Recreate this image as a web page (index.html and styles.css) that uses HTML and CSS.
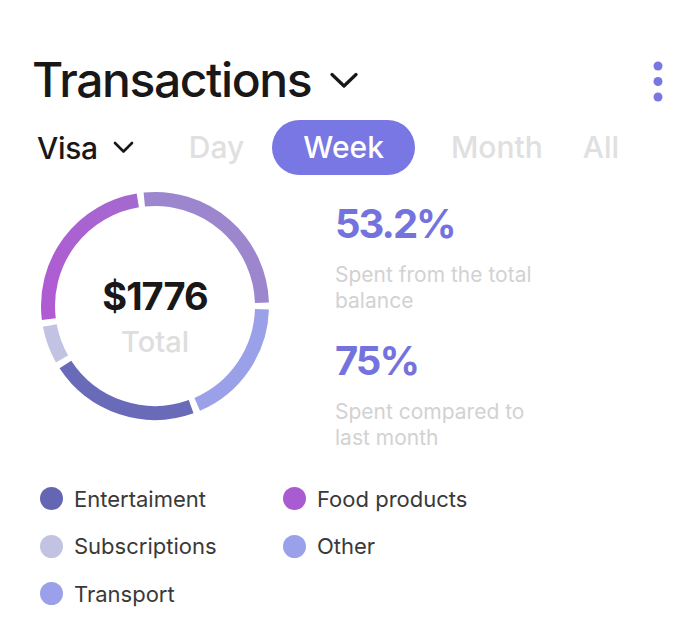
FILE: index.html
```html
<!DOCTYPE html>
<html lang="en">
<head>
<meta charset="utf-8">
<title>Transactions</title>
<link rel="stylesheet" href="styles.css">
</head>
<body>
<div class="card">
  <header class="head">
    <h1 class="title">Transactions
      <svg class="title-chev" width="28" height="17" viewBox="0 0 28 17"><path d="M2 2.5 L14 14 L26 2.5" fill="none" stroke="#1a1718" stroke-width="3.2" stroke-linecap="round" stroke-linejoin="round"/></svg>
    </h1>
    <button class="more" aria-label="More">
      <svg width="10" height="42" viewBox="0 0 10 42"><circle cx="5" cy="5" r="4.5" fill="#7a78e0"/><circle cx="5" cy="20.5" r="4.5" fill="#7a78e0"/><circle cx="5" cy="36" r="4.5" fill="#7a78e0"/></svg>
    </button>
  </header>

  <div class="filters">
    <div class="account">Visa
      <svg class="acc-chev" width="21" height="13" viewBox="0 0 21 13"><path d="M2 2 L10.5 10.5 L19 2" fill="none" stroke="#1a1718" stroke-width="2.6" stroke-linecap="round" stroke-linejoin="round"/></svg>
    </div>
    <nav class="tabs">
      <span class="tab">Day</span>
      <span class="tab active">Week</span>
      <span class="tab">Month</span>
      <span class="tab">All</span>
    </nav>
  </div>

  <div class="overview">
    <div class="donut">
      <svg width="230" height="230" viewBox="0 0 230 230">
        <g fill="none" stroke-width="14">
          <path d="M104.28 8.54 A107 107 0 0 1 221.95 111.73" stroke="#9c87cf"/>
          <path d="M221.95 118.27 A107 107 0 0 1 157.23 213.31" stroke="#9aa1e9"/>
          <path d="M151.16 215.71 A107 107 0 0 1 25.41 173.52" stroke="#6a6bb8"/>
          <path d="M22.01 167.93 A107 107 0 0 1 9.81 134.59" stroke="#c2c3e3"/>
          <path d="M8.81 128.13 A107 107 0 0 1 97.80 9.39" stroke="url(#mag)"/>
        </g>
        <defs>
          <linearGradient id="mag" x1="0" y1="1" x2="1" y2="0">
            <stop offset="0" stop-color="#b05ad3"/>
            <stop offset="1" stop-color="#a569cf"/>
          </linearGradient>
        </defs>
      </svg>
      <div class="donut-label">
        <span class="amount">$1776</span>
        <span class="amount-sub">Total</span>
      </div>
    </div>
    <div class="stats">
      <div class="stat">
        <div class="stat-value">53.2%</div>
        <div class="stat-desc">Spent from the total<br>balance</div>
      </div>
      <div class="stat">
        <div class="stat-value">75%</div>
        <div class="stat-desc">Spent compared to<br>last month</div>
      </div>
    </div>
  </div>

  <ul class="legend">
    <li><span class="dot" style="background:#6466b4"></span>Entertaiment</li>
    <li><span class="dot" style="background:#a95bd1"></span>Food products</li>
    <li><span class="dot" style="background:#c2c3e2"></span>Subscriptions</li>
    <li><span class="dot" style="background:#9aa0ea"></span>Other</li>
    <li><span class="dot" style="background:#9aa0ea"></span>Transport</li>
  </ul>
</div>
</body>
</html>
```

FILE: styles.css
```css
* { box-sizing: border-box; }

html, body {
  margin: 0;
  padding: 0;
  background: #ffffff;
}

body {
  font-family: "Inter", "Noto Sans", sans-serif;
  color: #1a1718;
  width: 696px;
  height: 623px;
  overflow: hidden;
}

.card {
  padding: 50px 33px 0 32px;
}

.head {
  display: flex;
  align-items: center;
  justify-content: space-between;
  height: 60px;
}

.title {
  margin: 0;
  display: flex;
  align-items: center;
  gap: 19px;
  font-size: 48px;
  font-weight: 500;
  line-height: 60px;
  letter-spacing: -1.4px;
  color: #1a1718;
}

.title-chev { display: block; margin-top: 1px; }

.more {
  border: 0;
  background: none;
  padding: 0;
  margin-top: 3px;
  margin-right: 0;
  display: block;
}
.more svg { display: block; }

.filters {
  margin-top: 10px;
  height: 55px;
  display: flex;
  align-items: center;
}

.account {
  display: flex;
  align-items: center;
  gap: 15px;
  margin-left: 5px;
  font-size: 30px;
  font-weight: 500;
  letter-spacing: -0.3px;
}
.acc-chev { display: block; }

.tabs {
  display: flex;
  align-items: center;
  gap: 36px;
  margin-left: 55px;
  font-size: 30px;
  font-weight: 500;
  letter-spacing: 0;
}

.tab {
  color: #e0e0e0;
  line-height: 55px;
}

.tab:first-child { margin-right: -8px; }
.tab:last-child { margin-left: 4px; }

.tab.active {
  background: #7877e3;
  color: #ffffff;
  border-radius: 28px;
  padding: 0 31px;
  height: 55px;
}

.overview {
  margin-top: 16px;
  display: flex;
  align-items: flex-start;
}

.donut {
  position: relative;
  width: 230px;
  height: 230px;
  margin-left: 8px;
}
.donut svg { display: block; }

.donut-label {
  position: absolute;
  inset: 0;
  display: flex;
  flex-direction: column;
  align-items: center;
  padding-top: 83px;
}

.amount {
  font-size: 38px;
  font-weight: 700;
  line-height: 44px;
  letter-spacing: -1px;
  color: #1a1718;
}

.amount-sub {
  margin-top: 4px;
  font-size: 29px;
  font-weight: 500;
  line-height: 40px;
  color: #dedede;
}

.stats {
  margin-left: 65px;
  padding-top: 8px;
  display: flex;
  flex-direction: column;
  gap: 22px;
}

.stat-value {
  font-size: 40px;
  font-weight: 700;
  line-height: 50px;
  letter-spacing: -2px;
  color: #7473dd;
}

.stat-desc {
  margin-top: 13px;
  font-size: 21px;
  line-height: 26px;
  color: #d2d2d2;
}

.legend {
  list-style: none;
  margin: 24px 0 0 8px;
  padding: 0;
  display: grid;
  grid-template-columns: 243px 243px;
}

.legend li {
  display: flex;
  align-items: center;
  gap: 11px;
  height: 47.5px;
  font-size: 22px;
  color: #3a3939;
}

.dot {
  width: 23px;
  height: 23px;
  border-radius: 50%;
  flex: none;
}
```
